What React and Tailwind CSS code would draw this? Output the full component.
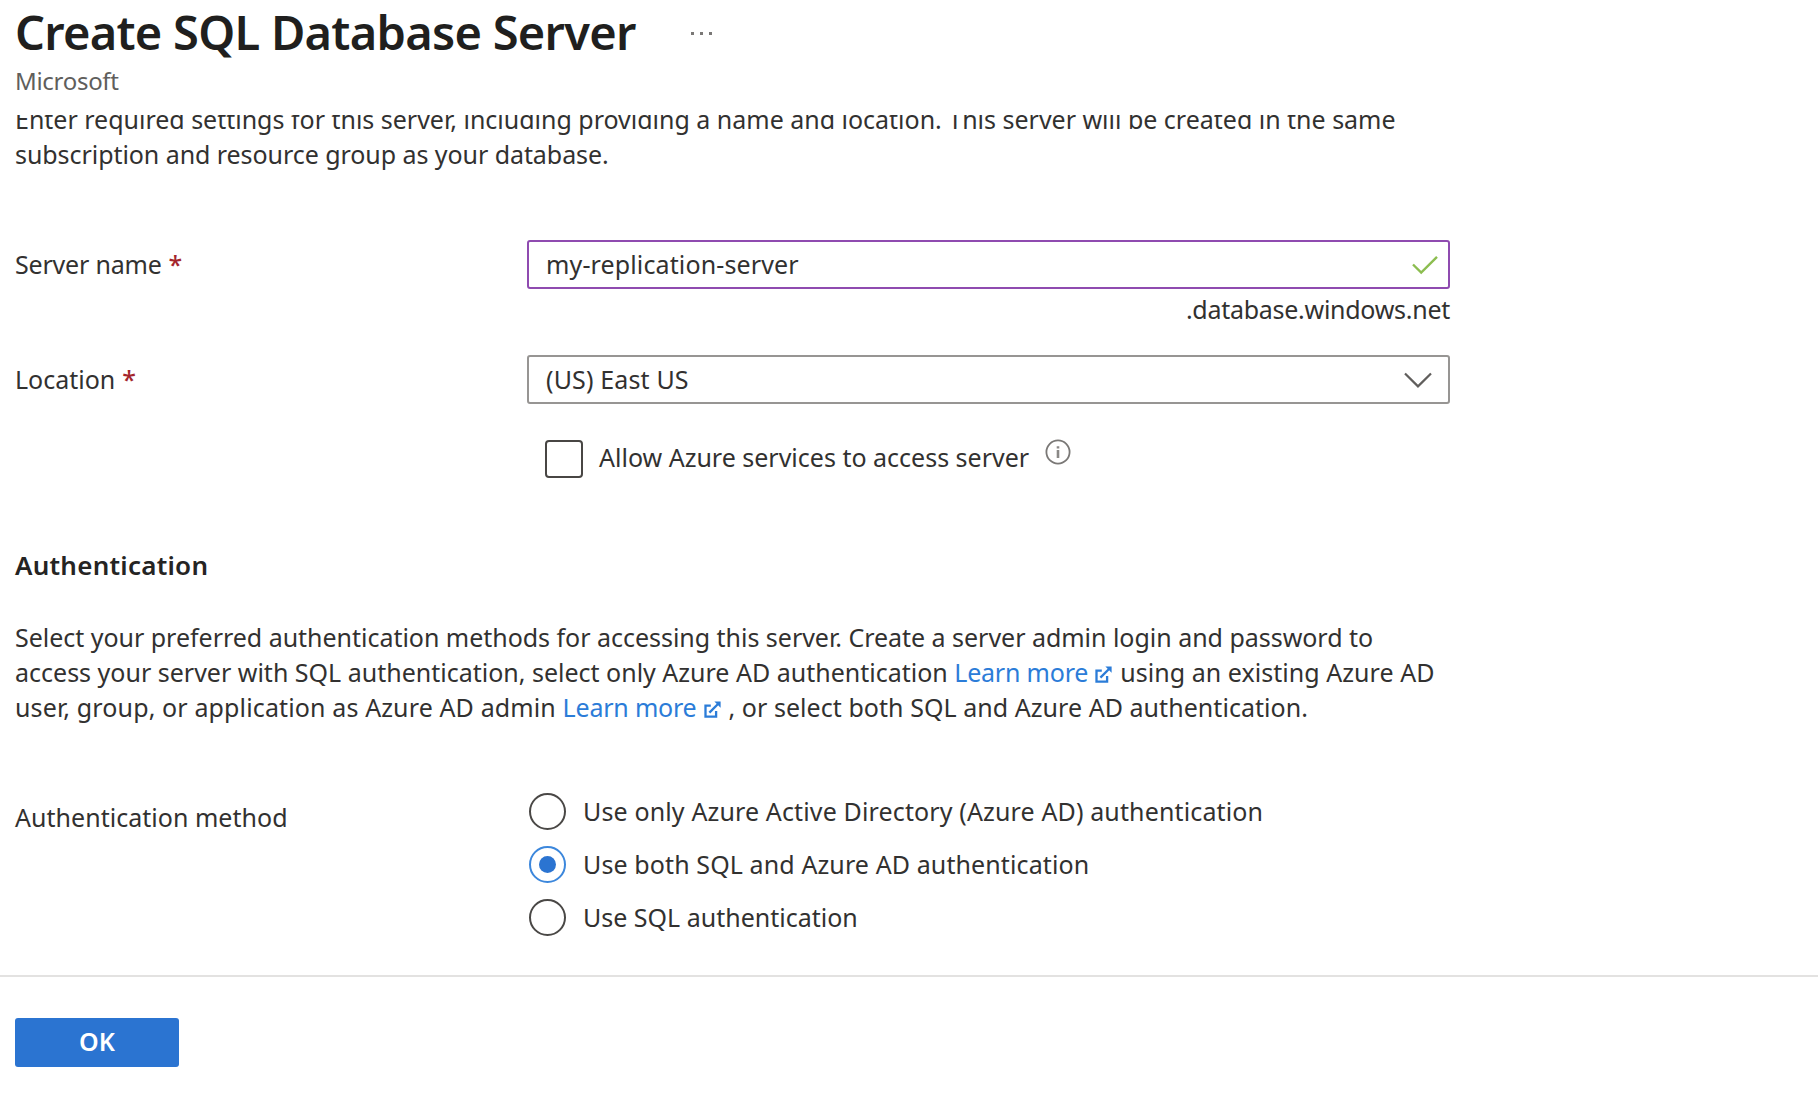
function ExternalIcon() {
  return (
    <svg viewBox="0 0 17 17" className="mr-2 ml-[7px] inline-block size-[17px] align-[-1px]" fill="none" stroke="currentColor" strokeWidth="2.3">
      <path d="M6.8 4.6H1.5v11h10.6V10" />
      <path d="M5.4 11.6 14 3" />
      <path d="M10.4 0.6h6.2v6.2z" fill="currentColor" stroke="none" />
    </svg>
  );
}

function LearnMore() {
  return (
    <a className="text-[#2b7cd8]">
      <span className="tracking-[-0.2px]">Learn more</span>
      <ExternalIcon />
    </a>
  );
}

function Label({ children, required, className = "" }) {
  return (
    <div className={`w-[512px] shrink-0 ${className}`}>
      {children}
      {required && <span className="ml-[7px] font-medium text-[#a4262c]">*</span>}
    </div>
  );
}

const methods = [
  { text: "Use only Azure Active Directory (Azure AD) authentication", tracking: "tracking-[0.14px]" },
  { text: "Use both SQL and Azure AD authentication", tracking: "tracking-[0.11px]", checked: true },
  { text: "Use SQL authentication", tracking: "tracking-[0px]" },
];

function Radio({ text, tracking, checked }) {
  return (
    <label className="flex h-[53.2px] items-center">
      <span className={`mr-[17px] flex size-[37px] items-center justify-center rounded-full border-2 ${checked ? "border-[#3c87dc]" : "border-[#4a4846]"}`}>
        {checked && <span className="size-[17px] rounded-full bg-[#2b74d1]" />}
      </span>
      <span className={tracking}>{text}</span>
    </label>
  );
}

export default function App() {
  return (
    <div className="flex h-[1096px] w-[1818px] flex-col overflow-hidden bg-white font-['Noto_Sans',sans-serif] text-[25px] leading-[35px] whitespace-nowrap text-[#323130]">
      <header className="h-[115px] shrink-0 px-[15px] pt-[2px]">
        <div className="flex items-start">
          <h1 className="text-[47px] leading-[60px] font-semibold tracking-[-0.73px] text-[#201f1e]">Create SQL Database Server</h1>
          <div className="mt-[30px] ml-[55px] flex gap-[6px]">
            <span className="size-[3px] bg-[#7a7876]" />
            <span className="size-[3px] bg-[#7a7876]" />
            <span className="size-[3px] bg-[#7a7876]" />
          </div>
        </div>
        <p className="mt-[2px] text-[24px] leading-[33px] tracking-[-0.3px] text-[#605e5c]">Microsoft</p>
      </header>

      <main className="h-[860px] shrink-0 overflow-hidden px-[15px]">
        <p className="-mt-[13px]">
          <span className="tracking-[-0.01px]">Enter required settings for this server, including providing a name and location. This server will be created in the same</span>
          <br />
          <span className="tracking-[-0.06px]">subscription and resource group as your database.</span>
        </p>

        <div className="mt-[68px] flex">
          <Label required className="mt-[7px] tracking-[-0.2px]">Server name</Label>
          <div className="w-[923px]">
            <div className="flex h-[49px] items-center justify-between rounded-[3px] border-2 border-[#8f4bb0] pr-[10px] pl-[17px]">
              <span className="tracking-[0.13px]">my-replication-server</span>
              <svg viewBox="0 0 26 20" className="h-5 w-[26px]" fill="none" stroke="#8cbd50" strokeWidth="2.4">
                <path d="M1 9.5 9.2 17.6 25 1.8" />
              </svg>
            </div>
            <p className="mt-[3px] text-right tracking-[-0.27px]">.database.windows.net</p>
          </div>
        </div>

        <div className="mt-7 flex">
          <Label required className="mt-[7px]">Location</Label>
          <div className="w-[923px]">
            <div className="flex h-[49px] items-center justify-between rounded-[3px] border-2 border-[#979593] pr-4 pl-[17px]">
              <span className="tracking-[0.15px]">(US) East US</span>
              <svg viewBox="0 0 28 16" className="h-4 w-7" fill="none" stroke="#605e5c" strokeWidth="2.2">
                <path d="M1 1.5 14 14.4 27 1.5" />
              </svg>
            </div>
            <div className="mt-[36px] flex h-[38px] items-center pl-[18px]">
              <span className="h-[38px] w-[38px] rounded-[4px] border-2 border-[#484644]" />
              <span className="-mt-[3px] ml-4">Allow Azure services to access server</span>
              <svg viewBox="0 0 26 26" className="-mt-[15px] ml-4 size-[26px]" fill="none" stroke="#7a7876" strokeWidth="1.8">
                <circle cx="13" cy="13" r="11.6" />
                <path d="M13 11v8M13 7.2v2.2" stroke="#8a8886" strokeWidth="2.6" />
              </svg>
            </div>
          </div>
        </div>

        <h2 className="mt-[70px] text-[26px] font-semibold tracking-[0.25px] text-[#252423]">Authentication</h2>

        <p className="mt-[37px]">
          <span className="tracking-[-0.025px]">Select your preferred authentication methods for accessing this server. Create a server admin login and password to</span>
          <br />
          access your server with SQL authentication, select only Azure AD authentication <LearnMore />
          <span className="tracking-[0.05px]">using an existing Azure AD</span>
          <br />
          <span className="tracking-[0.13px]">user, group, or application as Azure AD admin </span>
          <LearnMore />
          <span className="tracking-[0.05px]">, or select both SQL and Azure AD authentication.</span>
        </p>

        <div className="mt-[60px] flex">
          <Label className="mt-[15px] tracking-[0.03px]">Authentication method</Label>
          <div className="pl-[2px]">
            {methods.map((m) => (
              <Radio key={m.text} {...m} />
            ))}
          </div>
        </div>
      </main>

      <footer className="flex-1 border-t-2 border-[#e3e2e1] px-[15px] pt-[41px]">
        <button className="flex h-[49px] w-[164px] items-center justify-center rounded-[3px] bg-[#2b74d1] pb-[2px] font-semibold text-white">OK</button>
      </footer>
    </div>
  );
}
